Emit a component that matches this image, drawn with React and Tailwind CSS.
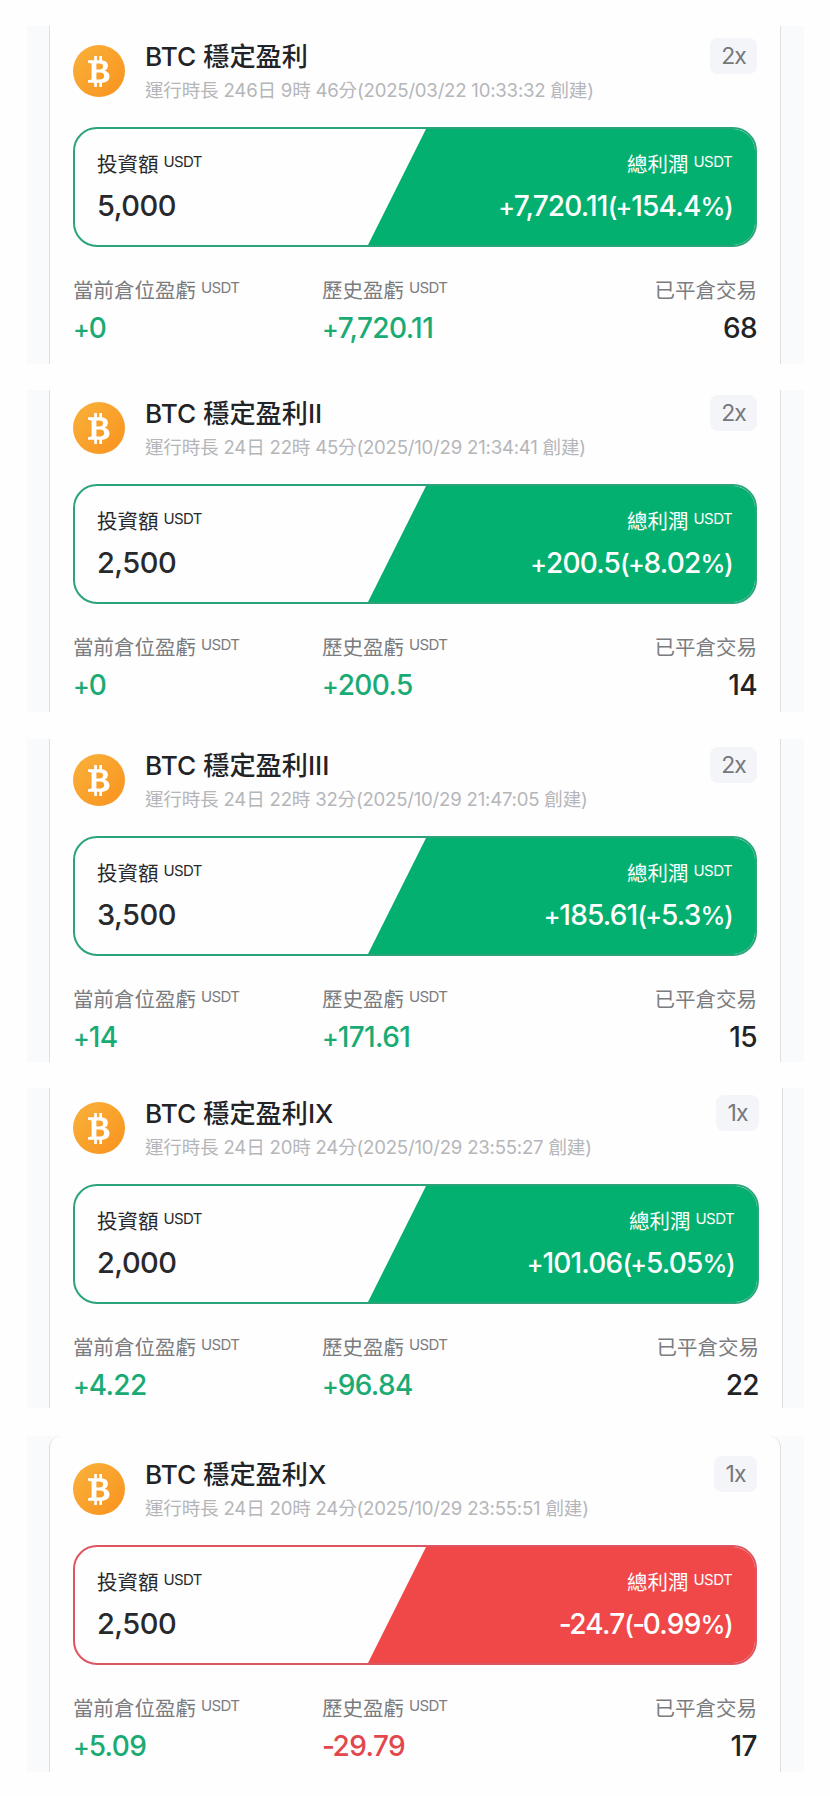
import clsx from 'clsx';

const bots = [
  {
    name: 'BTC 穩定盈利',
    meta: '運行時長 246日 9時 46分(2025/03/22 10:33:32 創建)',
    leverage: '2x',
    invested: '5,000',
    profit: '+7,720.11(+154.4%)',
    current: '+0',
    history: '+7,720.11',
    closed: '68',
    frame: 'h-[338px]',
    body: 'w-[732px] pt-3'
  },
  {
    name: 'BTC 穩定盈利II',
    meta: '運行時長 24日 22時 45分(2025/10/29 21:34:41 創建)',
    leverage: '2x',
    invested: '2,500',
    profit: '+200.5(+8.02%)',
    current: '+0',
    history: '+200.5',
    closed: '14',
    frame: 'mt-[26px] h-[322px]',
    body: 'w-[732px] pt-[5px]'
  },
  {
    name: 'BTC 穩定盈利III',
    meta: '運行時長 24日 22時 32分(2025/10/29 21:47:05 創建)',
    leverage: '2x',
    invested: '3,500',
    profit: '+185.61(+5.3%)',
    current: '+14',
    history: '+171.61',
    closed: '15',
    frame: 'mt-[27px] h-[323px]',
    body: 'w-[732px] pt-2'
  },
  {
    name: 'BTC 穩定盈利IX',
    meta: '運行時長 24日 20時 24分(2025/10/29 23:55:27 創建)',
    leverage: '1x',
    invested: '2,000',
    profit: '+101.06(+5.05%)',
    current: '+4.22',
    history: '+96.84',
    closed: '22',
    frame: 'mt-[26px] h-[320px]',
    body: 'w-[734px] pt-[7px]'
  },
  {
    name: 'BTC 穩定盈利X',
    meta: '運行時長 24日 20時 24分(2025/10/29 23:55:51 創建)',
    leverage: '1x',
    invested: '2,500',
    profit: '-24.7(-0.99%)',
    current: '+5.09',
    history: '-29.79',
    closed: '17',
    frame: 'mt-[28px] h-[336px]',
    body: 'w-[732px] rounded-t-xl pt-5'
  }
];

export default function App() {
  return (
    <div className="min-h-[1796px] w-[830px] bg-[#fefefe] pt-[26px] font-['Inter','Noto_Sans_CJK_TC',sans-serif]">
      {bots.map((bot) => (
        <BotCard key={bot.name} bot={bot} />
      ))}
    </div>
  );
}

function BotCard({ bot }) {
  return (
    <section className={clsx('mx-[27px] flex w-[777px] bg-[#f8fafb] pl-[22px]', bot.frame)}>
      <article className={clsx('border-x border-[#dcdfe1] bg-[#fefefe] px-[23px]', bot.body)}>
        <Header bot={bot} />
        <ProfitBox bot={bot} />

        {/* Stats */}
        <div className="mt-8 flex">
          <Stat label="當前倉位盈虧" unit value={bot.current} className="w-[249px]" />
          <Stat label="歷史盈虧" unit value={bot.history} className="flex-1" />
          <Stat label="已平倉交易" value={bot.closed} className="items-end" />
        </div>
      </article>
    </section>
  );
}

function Header({ bot }) {
  return (
    <header className="flex h-[89px] items-start">
      <div className="mt-[7px] flex size-[52px] items-center justify-center rounded-full bg-linear-to-br from-[#f9b23a] to-[#f8921c] text-white">
        <BitcoinMark />
      </div>
      <div className="ml-5 flex-1 whitespace-nowrap">
        <h2 className="mt-[3px] text-[26.2px] leading-8 font-medium text-[#222326]">{bot.name}</h2>
        <p className="mt-[5px] text-[18.6px] leading-6 tracking-[-0.22px] text-[#b5b6ba]">{bot.meta}</p>
      </div>
      <span
        className={clsx(
          'flex h-9 items-center justify-center rounded-lg bg-[#f4f5f9] text-[23px] tracking-[-1px] text-[#77787c]',
          bot.leverage === '1x' ? 'w-[43px]' : 'w-[47px]'
        )}
      >
        {bot.leverage}
      </span>
    </header>
  );
}

function BitcoinMark() {
  return (
    <svg width="23" height="31" viewBox="0 0 23 31" fill="currentColor">
      <path d="M6.2 0h2.7v5H6.2zM11.3 0H14v5h-2.7zM6.2 26h2.7v5H6.2zM11.3 26H14v5h-2.7z" />
      <path
        fillRule="evenodd"
        d="M0 4.2h12.6c4.6 0 7.3 2.1 7.3 5.6 0 2.5-1.3 4.2-3.4 4.9 3.1.6 5 2.6 5 5.6 0 4.2-3.1 6.5-8.2 6.5H0v-2.6l3.6-.7V7.4L0 6.8zM8.4 7.6v5.8h3c2.4 0 3.7-1 3.7-3s-1.3-2.8-3.7-2.8zM8.4 16.6v6.8h3.5c2.8 0 4.3-1.1 4.3-3.4s-1.5-3.4-4.3-3.4z"
      />
    </svg>
  );
}

function ProfitBox({ bot }) {
  const loss = bot.profit.startsWith('-');

  return (
    <div
      className={clsx(
        'flex h-[120px] overflow-hidden rounded-[24px] border-2',
        loss ? 'border-[#dc5560]' : 'border-[#2ba479]'
      )}
    >
      <div className="w-[294px] pt-6 pl-[22px] text-[#28292c]">
        <Label text="投資額" unit />
        <p className="mt-[13px] text-[29px] leading-8 font-medium tracking-[-0.5px]">{bot.invested}</p>
      </div>
      <div
        className={clsx(
          '-m-0.5 flex flex-1 flex-col items-end pt-[26px] pr-[25px] text-white [clip-path:polygon(60px_0,100%_0,100%_100%,0_100%)]',
          loss ? 'bg-[#f04849]' : 'bg-[#03b06f]'
        )}
      >
        <Label text="總利潤" unit />
        <p className="mt-[13px] text-[28px] leading-8 font-medium tracking-[-0.8px]">
          <Amount value={bot.profit} />
        </p>
      </div>
    </div>
  );
}

function Stat({ label, unit, value, className }) {
  const color = value.startsWith('+')
    ? 'text-[#1aab74]'
    : value.startsWith('-')
      ? 'text-[#e2474d]'
      : 'text-[#222326]';

  return (
    <div className={clsx('flex flex-col', className)}>
      <div className="text-[#7b7c80]">
        <Label text={label} unit={unit} />
      </div>
      <p className={clsx('mt-[9px] text-[28px] leading-8 font-medium tracking-[-0.6px]', color)}>
        <Amount value={value} />
      </p>
    </div>
  );
}

const symbolStyles = {
  '+': 'text-[0.9em] tracking-[-1.2px]',
  '-': 'tracking-[-2.4px]',
  '(': 'text-[0.94em] tracking-[-1.8px]',
  ')': 'text-[0.94em] tracking-[-1.8px]',
  '%': 'text-[0.9em] tracking-[-1.4px]'
};

// Signs, brackets and the percent mark are set tighter than the digits
function Amount({ value }) {
  return value.split(/([+()%-])/).map((part, i) =>
    symbolStyles[part] ? (
      <span key={i} className={symbolStyles[part]}>
        {part}
      </span>
    ) : (
      part
    )
  );
}

function Label({ text, unit }) {
  return (
    <div className="flex items-start gap-[5px] text-[20.5px] leading-6 whitespace-nowrap">
      {text}
      {unit && <span className="text-[15px] leading-[18px] tracking-[-0.6px]">USDT</span>}
    </div>
  );
}
